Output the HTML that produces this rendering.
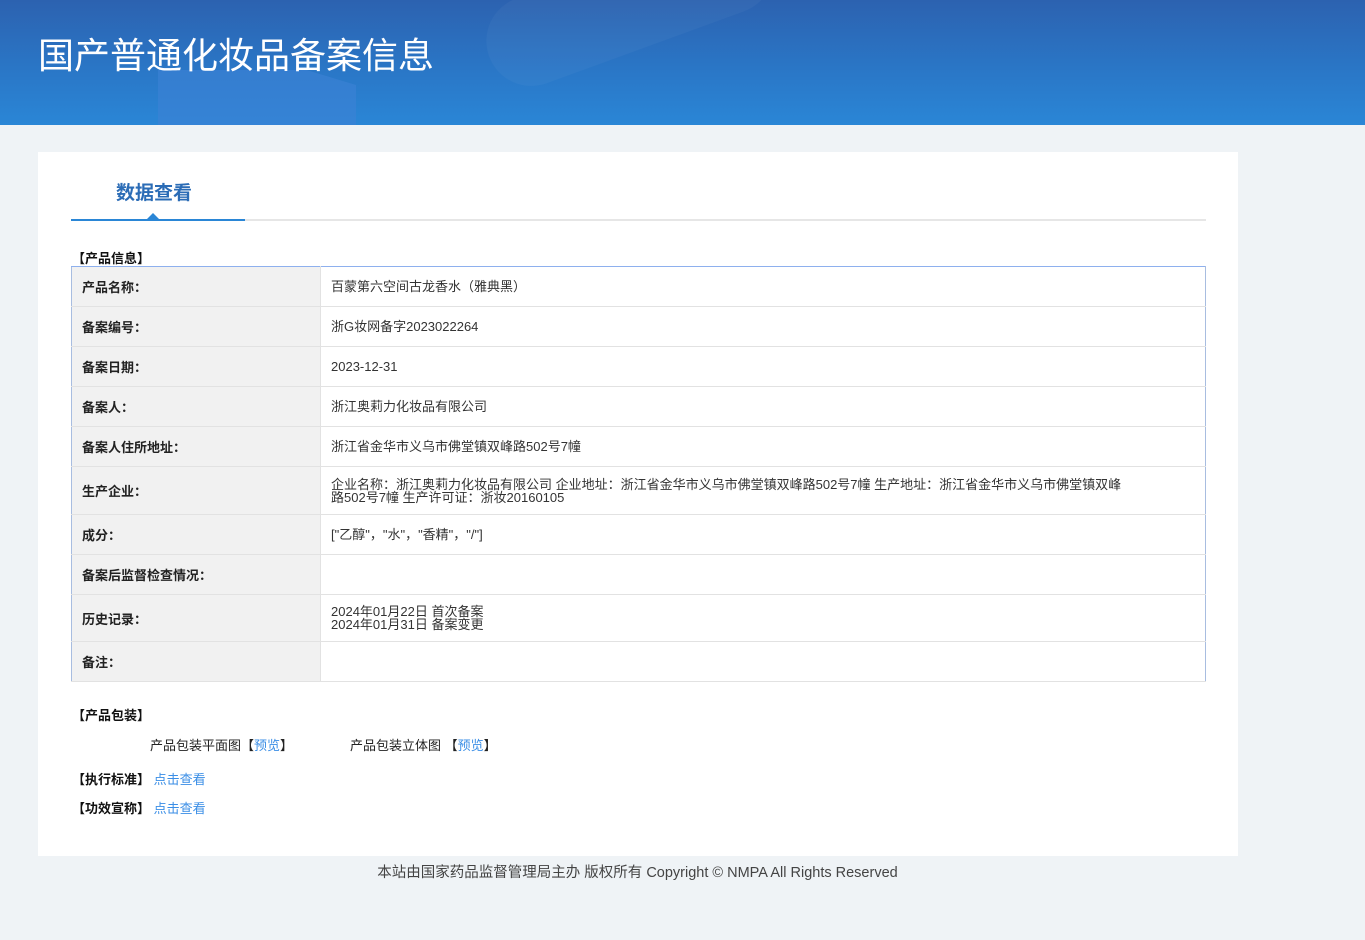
<!DOCTYPE html>
<html><head><meta charset="utf-8"><style>
*{margin:0;padding:0;box-sizing:border-box}
body{width:1365px;height:940px;background:#eff3f6;font-family:"Liberation Sans","Noto Sans CJK SC",sans-serif;position:relative;overflow:hidden;color:#333}
.hdr{position:absolute;left:0;top:0;width:1365px;height:125px;background:linear-gradient(180deg,#2c62b0 0%,#2a78c8 60%,#2a86d6 100%);overflow:hidden}
.hdr .s1{position:absolute;left:158px;top:70px;width:198px;height:60px;background:#3e82d6;opacity:.6;clip-path:polygon(0 0,75% 0,100% 25%,100% 100%,0 100%)}
.hdr .s2{position:absolute;left:480px;top:-40px;width:300px;height:90px;border-radius:45px;background:rgba(255,255,255,.035);transform:rotate(-20deg)}
.hdr h1{position:absolute;left:38px;top:27px;font-size:36px;font-weight:normal;color:#fff;letter-spacing:0px}
.card{position:absolute;left:38px;top:152px;width:1200px;height:704px;background:#fff}
.tab{position:absolute;left:78px;top:26px;font-size:19px;font-weight:bold;color:#2b6cb6}
.line{position:absolute;left:33px;top:67px;width:1135px;height:2px;background:#e6e6e6}
.line i{position:absolute;left:0;top:0;width:174px;height:2px;background:#2a86d6}
.tri{position:absolute;left:109px;top:61px;width:0;height:0;border-left:6px solid transparent;border-right:6px solid transparent;border-bottom:6px solid #2a86d6}
.sec{position:absolute;font-size:13px;font-weight:bold;color:#111}
table{position:absolute;left:33px;top:114px;width:1135px;border-collapse:collapse;border:1px solid #a8bde0;border-top-color:#8eb0ee;font-size:13px}
td{border-bottom:1px solid #e2e2e2;height:40px;vertical-align:middle}
td.l{width:249px;background:#f1f1f1;font-weight:bold;color:#222;padding-left:10px;border-right:1px solid #e2e2e2}
td.v{padding-left:10px;color:#333;line-height:13px}
.a{color:#3a8ee6}
.t{position:absolute;font-size:13px;color:#222}
.ft{position:absolute;left:0;top:861px;width:1275px;text-align:center;font-size:14.5px;color:#444}
</style></head><body>
<div class="hdr"><div class="s2"></div><div class="s1"></div><h1>国产普通化妆品备案信息</h1></div>
<div class="card">
<div class="tab">数据查看</div>
<div class="line"><i></i></div><div class="tri"></div>
<div class="sec" style="left:34px;top:96px">【产品信息】</div>
<table>
<tr><td class="l">产品名称：</td><td class="v">百蒙第六空间古龙香水（雅典黑）</td></tr>
<tr><td class="l">备案编号：</td><td class="v">浙G妆网备字2023022264</td></tr>
<tr><td class="l">备案日期：</td><td class="v">2023-12-31</td></tr>
<tr><td class="l">备案人：</td><td class="v">浙江奥莉力化妆品有限公司</td></tr>
<tr><td class="l">备案人住所地址：</td><td class="v">浙江省金华市义乌市佛堂镇双峰路502号7幢</td></tr>
<tr><td class="l" style="height:48px">生产企业：</td><td class="v">企业名称：浙江奥莉力化妆品有限公司 企业地址：浙江省金华市义乌市佛堂镇双峰路502号7幢 生产地址：浙江省金华市义乌市佛堂镇双峰<br>路502号7幢 生产许可证：浙妆20160105</td></tr>
<tr><td class="l">成分：</td><td class="v">["乙醇"，"水"，"香精"，"/"]</td></tr>
<tr><td class="l">备案后监督检查情况：</td><td class="v"></td></tr>
<tr><td class="l" style="height:47px">历史记录：</td><td class="v">2024年01月22日 首次备案<br>2024年01月31日 备案变更</td></tr>
<tr><td class="l">备注：</td><td class="v"></td></tr>
</table>
<div class="sec" style="left:34px;top:553px">【产品包装】</div>
<div class="t" style="left:112px;top:583px">产品包装平面图【<span class="a">预览</span>】</div>
<div class="t" style="left:312px;top:583px">产品包装立体图 【<span class="a">预览</span>】</div>
<div class="sec" style="left:34px;top:617px">【执行标准】 <span class="a" style="font-weight:normal">点击查看</span></div>
<div class="sec" style="left:34px;top:646px">【功效宣称】 <span class="a" style="font-weight:normal">点击查看</span></div>
</div>
<div class="ft">本站由国家药品监督管理局主办 版权所有 Copyright © NMPA All Rights Reserved</div>
</body></html>
